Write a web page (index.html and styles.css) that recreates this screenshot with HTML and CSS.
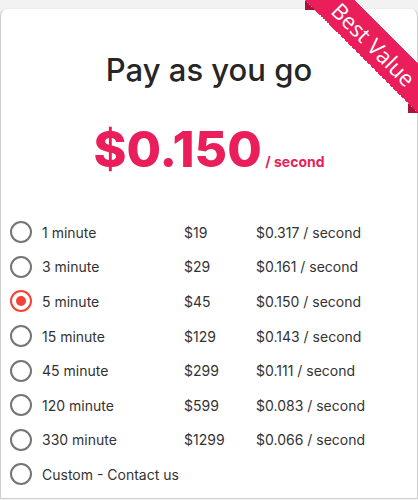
FILE: index.html
```html
<!DOCTYPE html>
<html lang="en">
<head>
  <meta charset="UTF-8">
  <meta name="viewport" content="width=device-width, initial-scale=1.0">
  <title>Pay as you go</title>
  <link rel="stylesheet" href="styles.css">
</head>
<body>
  <div class="card">
    <div class="ribbon"><span>Best Value</span></div>

    <h2 class="title">Pay as you go</h2>
    <div class="price">
      <span class="amount">$0.150</span>
      <span class="unit">/ second</span>
    </div>

    <form class="plans">
      <label class="plan">
        <input type="radio" name="plan" value="1">
        <span class="radio"></span>
        <span class="name">1 minute</span>
        <span class="cost">$19</span>
        <span class="rate">$0.317 / second</span>
      </label>
      <label class="plan">
        <input type="radio" name="plan" value="3">
        <span class="radio"></span>
        <span class="name">3 minute</span>
        <span class="cost">$29</span>
        <span class="rate">$0.161 / second</span>
      </label>
      <label class="plan">
        <input type="radio" name="plan" value="5" checked>
        <span class="radio"></span>
        <span class="name">5 minute</span>
        <span class="cost">$45</span>
        <span class="rate">$0.150 / second</span>
      </label>
      <label class="plan">
        <input type="radio" name="plan" value="15">
        <span class="radio"></span>
        <span class="name">15 minute</span>
        <span class="cost">$129</span>
        <span class="rate">$0.143 / second</span>
      </label>
      <label class="plan">
        <input type="radio" name="plan" value="45">
        <span class="radio"></span>
        <span class="name">45 minute</span>
        <span class="cost">$299</span>
        <span class="rate">$0.111 / second</span>
      </label>
      <label class="plan">
        <input type="radio" name="plan" value="120">
        <span class="radio"></span>
        <span class="name">120 minute</span>
        <span class="cost">$599</span>
        <span class="rate">$0.083 / second</span>
      </label>
      <label class="plan">
        <input type="radio" name="plan" value="330">
        <span class="radio"></span>
        <span class="name">330 minute</span>
        <span class="cost">$1299</span>
        <span class="rate">$0.066 / second</span>
      </label>
      <label class="plan">
        <input type="radio" name="plan" value="custom">
        <span class="radio"></span>
        <span class="name wide">Custom - Contact us</span>
      </label>
    </form>
  </div>
</body>
</html>
```

FILE: styles.css
```css
html, body {
  margin: 0;
  background: #f2f2f2;
}
body {
  padding-top: 8px;
  font-family: "Inter", "Open Sans", sans-serif;
}

.card {
  position: relative;
  height: 491px;
  box-sizing: border-box;
  background: #fff;
  border: 1px solid #cfcfcf;
  border-top-color: #ececec;
  border-radius: 8px 8px 0 0;
  padding-top: 41px;
}

/* ribbon in the corner: the band is a gradient, folds are border triangles */
.ribbon {
  position: absolute;
  top: -9px;
  right: -1px;
  width: 113px;
  height: 113px;
  background: linear-gradient(45deg, transparent 50%, #e91e5a 50%, #e91e5a 72%, transparent 72%);
}
.ribbon::before,
.ribbon::after {
  content: '';
  position: absolute;
  border: 5px solid #a8123c;
  border-top-color: transparent;
  border-right-color: transparent;
}
.ribbon::before {
  top: 0;
  left: 0;
}
.ribbon::after {
  bottom: 0;
  right: 0;
}
.ribbon span {
  position: absolute;
  left: 69px;
  top: 44px;
  color: #fff;
  font-family: "Open Sans", sans-serif;
  font-size: 22px;
  line-height: 1;
  white-space: nowrap;
  transform: translate(-50%, -50%) rotate(45deg);
}

.title {
  margin: 0;
  text-align: center;
  font-size: 31px;
  line-height: 40px;
  font-weight: 500;
  color: #262626;
}

.price {
  margin-top: 36px;
  text-align: center;
  color: #e91e5a;
  font-weight: 800;
  line-height: 46px;
}
.price .amount {
  font-size: 50px;
}
.price .unit {
  font-size: 14px;
  font-weight: 700;
}

.plans {
  margin-top: 30px;
  padding-left: 9px;
}
.plan {
  display: grid;
  grid-template-columns: 22px 132px 62px auto;
  column-gap: 10px;
  align-items: center;
  height: 34.6px;
  font-size: 14px;
  color: #333;
  cursor: pointer;
}
.plan input {
  display: none;
}
.plan .radio {
  width: 22px;
  height: 22px;
  box-sizing: border-box;
  border: 2px solid #757575;
  border-radius: 50%;
  position: relative;
}
.plan input:checked + .radio {
  border-color: #f44336;
}
.plan input:checked + .radio::after {
  content: '';
  position: absolute;
  top: 4px;
  left: 4px;
  width: 10px;
  height: 10px;
  border-radius: 50%;
  background: #f44336;
}
.plan .wide {
  grid-column: 2 / 5;
}
```
